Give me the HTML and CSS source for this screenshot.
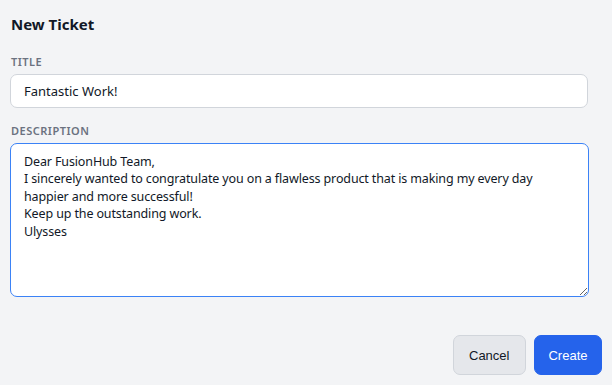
FILE: index.html
```html
<!DOCTYPE html>
<html lang="en">
<head>
<meta charset="utf-8">
<title>New Ticket</title>
<link rel="stylesheet" href="styles.css">
</head>
<body>
<form class="ticket-form">
  <h1 class="form-title">New Ticket</h1>
  <div class="field">
    <label class="field-label" for="title">Title</label>
    <input class="text-input" id="title" type="text" value="Fantastic Work!">
  </div>
  <div class="field">
    <label class="field-label" for="desc">Description</label>
    <textarea class="text-area" id="desc">Dear FusionHub Team,
I sincerely wanted to congratulate you on a flawless product that is making my every day happier and more successful!
Keep up the outstanding work.
Ulysses</textarea>
  </div>
  <div class="actions">
    <button type="button" class="btn btn-secondary">Cancel</button>
    <button type="button" class="btn btn-primary">Create</button>
  </div>
</form>
</body>
</html>
```
FILE: styles.css
```css
* { box-sizing: border-box; }
html, body { margin: 0; padding: 0; }
body {
  background: #f3f4f6;
  font-family: "Noto Sans", "Open Sans", sans-serif;
  color: #111827;
  width: 612px;
  height: 385px;
  overflow: hidden;
}
.ticket-form {
  display: flex;
  flex-direction: column;
  padding: 14px 10px 10px 10px;
}
.form-title {
  margin: 0 0 0 1px;
  font-size: 15px;
  font-weight: 700;
  line-height: 20px;
  color: #111827;
}
.field {
  display: flex;
  flex-direction: column;
}
.field-label {
  margin: 21px 0 0 1px;
  font-size: 11px;
  font-weight: 600;
  letter-spacing: 0.5px;
  line-height: 14px;
  text-transform: uppercase;
  color: #6b7280;
}
.text-input {
  margin-top: 5px;
  height: 34px;
  width: 578px;
  padding: 0 13px;
  border: 1px solid #d1d5db;
  border-radius: 7px;
  background: #fff;
  font: inherit;
  font-size: 13px;
  color: #111827;
  outline: none;
}
.field + .field .field-label { margin-top: 16px; }
.text-area {
  margin-top: 5px;
  width: 579px;
  height: 154px;
  padding: 9px 13px;
  border: 1px solid #3b82f6;
  border-radius: 7px;
  background: #fff;
  font: inherit;
  font-size: 12.5px;
  letter-spacing: -0.13px;
  line-height: 17.4px;
  color: #111827;
  outline: none;
  resize: both;
}
.actions {
  display: flex;
  justify-content: flex-end;
  gap: 8px;
  margin-top: 38px;
}
.btn {
  height: 40px;
  border-radius: 7px;
  font-family: "Liberation Sans", Arial, sans-serif;
  font-size: 13px;
  cursor: pointer;
}
.btn-secondary {
  padding: 0 15.5px;
  background: #e5e7eb;
  border: 1px solid #d1d5db;
  color: #111827;
}
.btn-primary {
  padding: 0 13.5px;
  background: #2563eb;
  border: 1px solid #2563eb;
  color: #fff;
}
```
